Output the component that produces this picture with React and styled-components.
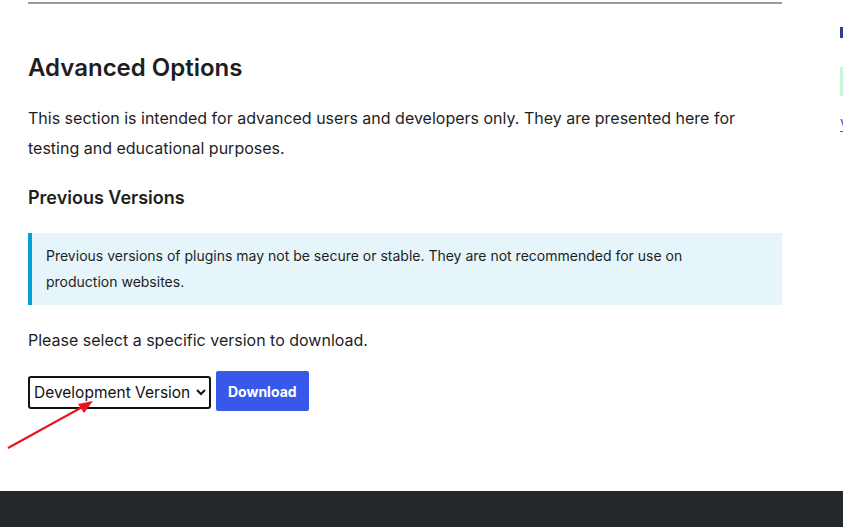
import styled, { createGlobalStyle } from 'styled-components';

const Global = createGlobalStyle`
  html, body { margin: 0; padding: 0; background: #fff; }
  body { font-family: Inter, "Noto Sans", sans-serif; color: #1e1e1e; }
  #root { min-height: 527px; display: flex; flex-direction: column; }
`;

const App = () => {
  return (
    <>
      <Global />
      <Page>
        <Main>
          <Rule />
          <Heading>Advanced Options</Heading>
          <Lead>
            This section is intended for advanced users and developers only. They are presented here for
            testing and educational purposes.
          </Lead>
          <SubHeading>Previous Versions</SubHeading>
          <Notice>
            Previous versions of plugins may not be secure or stable. They are not recommended for use on
            production websites.
          </Notice>
          <Lead>Please select a specific version to download.</Lead>
          <DownloadRow>
            <VersionSelect defaultValue="dev">
              <option value="dev">Development Version</option>
            </VersionSelect>
            <DownloadButton>Download</DownloadButton>
          </DownloadRow>
        </Main>
        <Sidebar>
          <SideMark />
          <SideBar />
          <SideLink>V</SideLink>
        </Sidebar>
        <Arrow width="100" height="60" viewBox="0 0 100 60">
          <line x1="8" y1="52" x2="86" y2="9" stroke="#e8161b" strokeWidth="2" />
          <polygon points="93,5 78,8 84,17" fill="#e8161b" />
        </Arrow>
      </Page>
      <Footer />
    </>
  );
};

const Page = styled.div`
  position: relative;
  display: flex;
  height: 491px;
  overflow: hidden;
`;

const Main = styled.section`
  flex: 0 0 754px;
  width: 754px;
  margin-left: 28px;
  padding-top: 2px;
`;

const Rule = styled.div`
  height: 2px;
  background: #9a9a9a;
`;

const Heading = styled.h2`
  font-size: 24px;
  font-weight: 600;
  line-height: 30px;
  margin: 49px 0 0;
  color: #1e1e1e;
`;

const Lead = styled.p`
  font-size: 16px;
  line-height: 30px;
  margin: 20px 0 0;
  color: #1e1e1e;
`;

const SubHeading = styled.h3`
  font-size: 18px;
  font-weight: 600;
  line-height: 24px;
  margin: 23px 0 0;
`;

const Notice = styled.div`
  margin-top: 23px;
  background: #e5f5fa;
  border-left: 4px solid #00a0d2;
  padding: 10px 32px 10px 14px;
  font-size: 14px;
  line-height: 26px;
  color: #1e1e1e;

  & + p {
    margin-top: 20px;
  }
`;

const DownloadRow = styled.div`
  display: flex;
  align-items: center;
  gap: 5px;
  margin-top: 16px;
`;

const VersionSelect = styled.select`
  font-family: Inter, sans-serif;
  font-size: 15.5px;
  height: 33px;
  width: 183px;
  margin-top: 2px;
  border: 2px solid #111;
  border-radius: 3px;
  background: #fff;
  color: #111;
  padding: 0;
`;

const DownloadButton = styled.button`
  font-family: Inter, sans-serif;
  font-size: 14px;
  font-weight: 700;
  color: #fff;
  background: #3858e9;
  border: none;
  border-radius: 2px;
  height: 40px;
  padding: 0 12px;
`;

const Sidebar = styled.aside`
  flex: 0 0 auto;
  margin-left: 58px;
  padding-top: 27px;
  display: flex;
  flex-direction: column;
`;

const SideMark = styled.div`
  width: 3px;
  height: 11px;
  background: #2c3e8f;
`;

const SideBar = styled.div`
  margin-top: 29px;
  width: 4px;
  height: 29px;
  background: #c8f7d8;
`;

const SideLink = styled.span`
  margin-top: 21px;
  font-size: 14px;
  color: #3858e9;
  text-decoration: underline;
  line-height: 16px;
`;

const Arrow = styled.svg`
  position: absolute;
  left: 0;
  top: 396px;
`;

const Footer = styled.footer`
  height: 36px;
  background: #23282d;
`;

export default App;
